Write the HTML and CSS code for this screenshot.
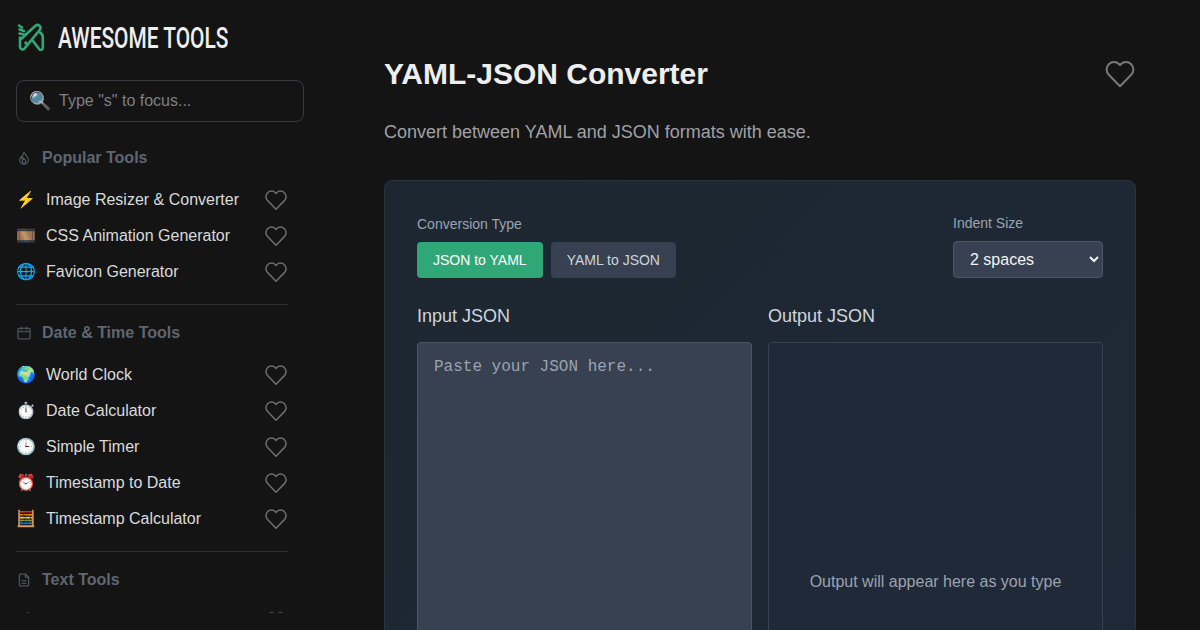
FILE: index.html
```html
<!DOCTYPE html>
<html lang="en">
<head>
    <meta charset="UTF-8">
    <meta name="viewport" content="width=device-width, initial-scale=1.0">
    <title>YAML-JSON Converter</title>
    <link rel="stylesheet" href="styles.css">
</head>
<body>
    <svg class="svg-defs" width="0" height="0" aria-hidden="true">
        <symbol id="heart" viewBox="0 0 24 24">
            <path d="M12 21.2 3.6 12.6a5.6 5.6 0 0 1 0-7.9 5.5 5.5 0 0 1 7.8 0l.6.7.6-.7a5.5 5.5 0 0 1 7.8 0 5.6 5.6 0 0 1 0 7.9z" fill="none" stroke="currentColor" stroke-width="1.5" stroke-linejoin="round"/>
        </symbol>
    </svg>

    <aside class="sidebar">
        <div class="brand">
            <svg class="brand-logo" viewBox="0 0 30 30" fill="none" stroke="#2fa777" stroke-width="2.6" stroke-linecap="round" stroke-linejoin="round">
                <path d="M6 4.5 3 2.5M8 8 3.500 6.500M8 11.500 3.500 10.500"/>
                <path d="M4 14.500v9.500a2.500 2.500 0 0 0 4.400 1.600L24 6.500a3 3 0 0 0-4.300-4L4 17"/>
                <path d="M24 9.500c2 1 2.800 3 2.800 5v10.500c0 2-2.300 2.500-3.500 1.200L17 18"/>
                <circle cx="10" cy="20" r="1" stroke-width="1.600"/>
            </svg>
            <span class="brand-name">AWESOME TOOLS</span>
        </div>

        <div class="search">
            <span class="search-icon">🔍</span>
            <span class="search-hint">Type "s" to focus...</span>
        </div>

        <nav class="tool-nav">
            <section class="tool-group">
                <h3 class="group-title">
                    <svg class="group-icon" viewBox="0 0 24 24" fill="none" stroke="currentColor" stroke-width="1.600" stroke-linejoin="round"><path d="M12 3c.5 3.500 6.500 6.500 6.500 12a6.500 6.500 0 0 1-13 0c0-2.500 1-4 2.500-5 0 2 .8 3 2 3.500C9.500 9.500 10 6 12 3z"/><path d="M12 20a2.800 2.800 0 0 0 2.800-2.800c0-1.700-1.800-2.700-2.800-4.200-1 1.500-2.800 2.500-2.800 4.200A2.800 2.800 0 0 0 12 20z"/></svg>
                    Popular Tools
                </h3>
                <ul class="tool-list">
                    <li class="tool-row"><span class="tool-emoji">⚡</span><span class="tool-name">Image Resizer &amp; Converter</span><svg class="heart"><use href="#heart"/></svg></li>
                    <li class="tool-row"><span class="tool-emoji">🎞️</span><span class="tool-name">CSS Animation Generator</span><svg class="heart"><use href="#heart"/></svg></li>
                    <li class="tool-row"><span class="tool-emoji">🌐</span><span class="tool-name">Favicon Generator</span><svg class="heart"><use href="#heart"/></svg></li>
                </ul>
            </section>

            <section class="tool-group">
                <h3 class="group-title">
                    <svg class="group-icon" viewBox="0 0 24 24" fill="none" stroke="currentColor" stroke-width="1.600" stroke-linecap="round" stroke-linejoin="round"><rect x="3" y="5" width="18" height="16" rx="2"/><path d="M3 10h18M8 3v4M16 3v4"/></svg>
                    Date &amp; Time Tools
                </h3>
                <ul class="tool-list">
                    <li class="tool-row"><span class="tool-emoji">🌍</span><span class="tool-name">World Clock</span><svg class="heart"><use href="#heart"/></svg></li>
                    <li class="tool-row"><span class="tool-emoji">⏱️</span><span class="tool-name">Date Calculator</span><svg class="heart"><use href="#heart"/></svg></li>
                    <li class="tool-row"><span class="tool-emoji">🕒</span><span class="tool-name">Simple Timer</span><svg class="heart"><use href="#heart"/></svg></li>
                    <li class="tool-row"><span class="tool-emoji">⏰</span><span class="tool-name">Timestamp to Date</span><svg class="heart"><use href="#heart"/></svg></li>
                    <li class="tool-row"><span class="tool-emoji">🧮</span><span class="tool-name">Timestamp Calculator</span><svg class="heart"><use href="#heart"/></svg></li>
                </ul>
            </section>

            <section class="tool-group">
                <h3 class="group-title">
                    <svg class="group-icon" viewBox="0 0 24 24" fill="none" stroke="currentColor" stroke-width="1.600" stroke-linecap="round" stroke-linejoin="round"><path d="M14 3H7a2 2 0 0 0-2 2v14a2 2 0 0 0 2 2h10a2 2 0 0 0 2-2V8z"/><path d="M14 3v5h5M9 13h6M9 17h6"/></svg>
                    Text Tools
                </h3>
                <ul class="tool-list">
                    <li class="tool-row"><span class="tool-emoji">🔊</span><span class="tool-name">Text to Speech</span><svg class="heart"><use href="#heart"/></svg></li>
                </ul>
            </section>
        </nav>
    </aside>

    <main class="content">
        <header class="page-head">
            <h1>YAML-JSON Converter</h1>
            <svg class="heart heart-large"><use href="#heart"/></svg>
        </header>
        <p class="page-desc">Convert between YAML and JSON formats with ease.</p>

        <div class="card">
            <div class="options">
                <div>
                    <div class="option-label">Conversion Type</div>
                    <div class="btn-group">
                        <button class="btn btn-active">JSON to YAML</button>
                        <button class="btn">YAML to JSON</button>
                    </div>
                </div>
                <div class="indent">
                    <label class="option-label" for="indent">Indent Size</label>
                    <select id="indent" class="indent-select">
                        <option>2 spaces</option>
                        <option>4 spaces</option>
                    </select>
                </div>
            </div>

            <div class="panes">
                <div class="pane">
                    <div class="pane-title">Input JSON</div>
                    <textarea class="pane-input" placeholder="Paste your JSON here..."></textarea>
                </div>
                <div class="pane">
                    <div class="pane-title">Output JSON</div>
                    <div class="pane-output">Output will appear here as you type</div>
                </div>
            </div>
        </div>
    </main>
</body>
</html>
```

FILE: styles.css
```css
* {
    box-sizing: border-box;
}

html, body {
    height: 630px;
    overflow: hidden;
}

body {
    display: flex;
    margin: 0;
    background-color: #141415;
    color: #e5e7eb;
    font-family: 'Liberation Sans', Arial, sans-serif;
}

.svg-defs {
    position: absolute;
}

/* sidebar */
.sidebar {
    flex: none;
    display: flex;
    flex-direction: column;
    width: 320px;
    height: 630px;
    padding: 16px 16px 17px;
}

.brand {
    display: flex;
    align-items: center;
    gap: 12px;
    height: 44px;
}

.brand-logo {
    width: 30px;
    height: 30px;
    margin-left: 0;
}

.brand-name {
    font-family: 'Roboto', 'Liberation Sans', sans-serif;
    font-size: 29px;
    font-weight: 500;
    color: #eeeeee;
    white-space: nowrap;
    transform: scaleX(0.72);
    transform-origin: left center;
}

.search {
    display: flex;
    align-items: center;
    gap: 8px;
    height: 42px;
    margin-top: 20px;
    padding: 0 12px;
    border: 1px solid #3a3c40;
    border-radius: 8px;
    font-size: 16px;
}

.search-icon {
    font-size: 18px;
    line-height: 1;
}

.search-hint {
    color: #7c7f85;
}

.tool-nav {
    flex: 1;
    min-height: 0;
    width: 272px;
    margin-top: 24px;
    overflow: hidden;
}

.tool-group + .tool-group {
    margin-top: 14px;
    padding-top: 16px;
    border-top: 1px solid #2e2f31;
}

.group-title {
    display: flex;
    align-items: center;
    gap: 10px;
    margin: 0 0 12px;
    font-size: 16px;
    line-height: 24px;
    font-weight: 700;
    color: #5f6670;
}

.group-icon {
    width: 16px;
    height: 16px;
    color: #5b5e63;
}

.tool-list {
    margin: 0;
    padding: 0;
    list-style: none;
}

.tool-row {
    display: flex;
    align-items: center;
    height: 36px;
    font-size: 16px;
    color: #d9dadc;
}

.tool-emoji {
    flex: none;
    width: 30px;
    font-size: 16px;
    line-height: 1;
}

.tool-name {
    flex: 1;
    white-space: nowrap;
}

.heart {
    flex: none;
    width: 24px;
    height: 24px;
    color: #6f7topx;
    color: #6e6f71;
}

.heart-large {
    width: 32px;
    height: 32px;
    color: #77787a;
}

/* main */
.content {
    flex: 1;
    min-width: 0;
    padding: 0 64px 0 64px;
}

.page-head {
    display: flex;
    align-items: center;
    justify-content: space-between;
    height: 36px;
    margin-top: 56px;
}

.page-head h1 {
    margin: 0;
    font-size: 30px;
    line-height: 36px;
    font-weight: 700;
    color: #eeeeee;
}

.page-desc {
    margin: 28px 0 0;
    font-size: 18px;
    line-height: 24px;
    color: #a0a1a4;
}

.card {
    height: 600px;
    margin-top: 36px;
    padding: 32px;
    border: 1px solid #2b3340;
    border-radius: 8px;
    background: linear-gradient(135deg, #1d2731, #1f2937);
}

.options {
    display: flex;
    align-items: flex-end;
    justify-content: space-between;
}

.option-label {
    display: block;
    margin-bottom: 8px;
    font-size: 14px;
    line-height: 20px;
    color: #9ca3af;
}

.btn-group {
    display: flex;
    gap: 8px;
}

.btn {
    height: 36px;
    padding: 0 16px;
    border: none;
    border-radius: 4px;
    background-color: #374151;
    color: #d1d5db;
    font-family: inherit;
    font-size: 14px;
}

.btn-active {
    background-color: #2fa777;
    color: #ffffff;
}

.indent-select {
    display: block;
    width: 150px;
    height: 37px;
    padding: 0 0 0 12px;
    border: 1px solid #4b5563;
    border-radius: 4px;
    background-color: #374151;
    color: #f3f4f6;
    font-family: inherit;
    font-size: 16px;
}

.panes {
    display: grid;
    grid-template-columns: 1fr 1fr;
    gap: 16px;
    margin-top: 26px;
}

.pane-title {
    margin-bottom: 14px;
    font-size: 18px;
    line-height: 24px;
    color: #d1d5db;
}

.pane-input,
.pane-output {
    display: block;
    width: 100%;
    height: 480px;
    border: 1px solid #4b5563;
    border-radius: 4px;
}

.pane-input {
    padding: 12px 16px;
    background-color: #374151;
    color: #f3f4f6;
    font-family: 'Liberation Mono', monospace;
    font-size: 16px;
    line-height: 24px;
    resize: none;
}

.pane-input::placeholder {
    color: #9ca3af;
}

.pane-output {
    display: flex;
    align-items: center;
    justify-content: center;
    border-color: #374151;
    background-color: #1f2937;
    font-size: 16px;
    color: #9ca3af;
}
```
